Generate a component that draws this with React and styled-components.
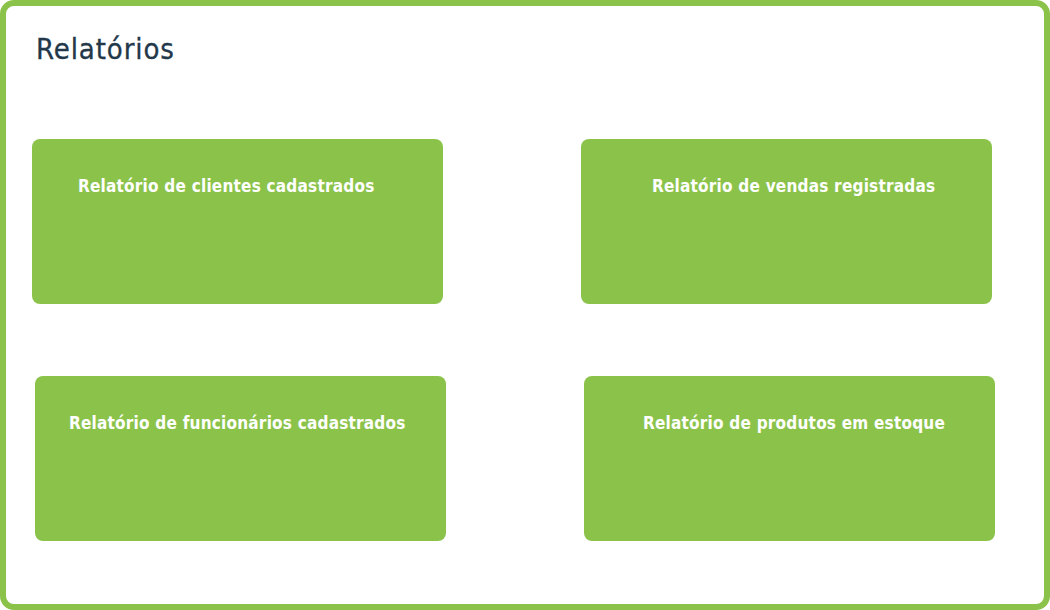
import React from "react";
import styled, { createGlobalStyle } from "styled-components";

const Global = createGlobalStyle`
  html, body { margin: 0; padding: 0; background: #ffffff; }
  body { font-family: "DejaVu Sans Condensed", "DejaVu Sans", sans-serif; }
  * { box-sizing: border-box; }
`;

const Frame = styled.div`
  width: 1050px;
  height: 610px;
  border: 6px solid #8bc34a;
  border-radius: 14px;
  background: #ffffff;
  display: flex;
  flex-direction: column;
`;

const Title = styled.h1`
  margin: 0;
  padding: 26px 0 0 30px;
  font-family: "DejaVu Sans Condensed", "DejaVu Sans", sans-serif;
  font-weight: 400;
  font-size: 29px;
  letter-spacing: 0.9px;
  line-height: 34px;
  color: #22384a;
  -webkit-text-stroke: 0.3px #22384a;
`;

const Row = styled.div`
  display: flex;
  gap: 138px;
  padding-left: ${(p) => p.$offset}px;
  margin-top: ${(p) => p.$top}px;
`;

const Card = styled.div`
  width: 411px;
  height: 165px;
  background: #8bc34a;
  border-radius: 8px;
  padding: 36px 0 0 ${(p) => p.$indent}px;
`;

const CardTitle = styled.span`
  font-family: "DejaVu Sans Condensed", "DejaVu Sans", sans-serif;
  font-weight: 600;
  font-size: 17px;
  letter-spacing: 0.22px;
  line-height: 22px;
  color: #ffffff;
`;

export default function App() {
  return (
    <>
      <Global />
      <Frame>
        <Title>Relatórios</Title>
        <Row $offset={26} $top={73}>
          <Card $indent={46}>
            <CardTitle>Relatório de clientes cadastrados</CardTitle>
          </Card>
          <Card $indent={71}>
            <CardTitle>Relatório de vendas registradas</CardTitle>
          </Card>
        </Row>
        <Row $offset={29} $top={72}>
          <Card $indent={34}>
            <CardTitle>Relatório de funcionários cadastrados</CardTitle>
          </Card>
          <Card $indent={59}>
            <CardTitle>Relatório de produtos em estoque</CardTitle>
          </Card>
        </Row>
      </Frame>
    </>
  );
}
